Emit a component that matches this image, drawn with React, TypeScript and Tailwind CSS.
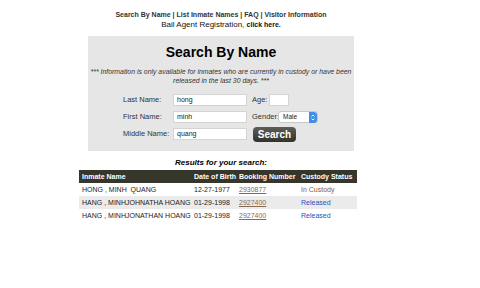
import React from 'react';

const rows = [
  { name: 'HONG , MINH  QUANG', dob: '12-27-1977', booking: '2930877', status: 'In Custody' },
  { name: 'HANG , MINHJOHNATHA HOANG', dob: '01-29-1998', booking: '2927400', status: 'Released' },
  { name: 'HANG , MINHJONATHAN HOANG', dob: '01-29-1998', booking: '2927400', status: 'Released' },
];

function Field({ value, width }: { value: string; width: string }) {
  return (
    <div className={`${width} h-[12px] bg-white border border-[#d4d4d4] text-[7px] leading-[10px] pl-[3px] text-[#222]`}>
      {value}
    </div>
  );
}

export default function App() {
  return (
    <div className="w-[480px] h-[288px] bg-white overflow-hidden text-[#222]" style={{ fontFamily: 'Arial, "Liberation Sans", sans-serif' }}>
      <div className="w-[442px]">
        <div className="pt-[10px] text-center">
          <div className="text-[7px] leading-[10px] font-bold text-[#333]">
            Search By Name | List Inmate Names | FAQ | Visitor Information
          </div>
          <div className="text-[8px] leading-[10px] text-[#111]">
            Bail Agent Registration, <span className="font-bold text-[7px]">click here.</span>
          </div>
        </div>

        <div className="ml-[88px] mt-[6px] w-[266px] h-[115px] bg-[#e6e6e6] pt-[7px]">
          <h1 className="text-center text-[14px] leading-[18px] font-bold text-black">Search By Name</h1>
          <p className="mt-[6px] text-center text-[6.9px] leading-[9px] italic text-[#333] whitespace-nowrap">
            *** Information is only available for inmates who are currently in custody or have been
            <br />
            released in the last 30 days. ***
          </p>

          <div className="mt-[9px] pl-[35px] flex flex-col gap-[5px] text-[7.5px] text-[#333]">
            <div className="flex items-center h-[12px]">
              <span className="w-[50px]">Last Name:</span>
              <Field value="hong" width="w-[74px]" />
              <span className="ml-[5px] w-[17px]">Age:</span>
              <Field value="" width="w-[20px]" />
            </div>
            <div className="flex items-center h-[12px]">
              <span className="w-[50px]">First Name:</span>
              <Field value="minh" width="w-[74px]" />
              <span className="ml-[5px] w-[26px]">Gender:</span>
              <div className="w-[40px] h-[12px] bg-white border border-[#c8c8c8] rounded-[3px] flex items-center justify-between pl-[4px] text-[6.5px] text-[#222]">
                <span>Male</span>
                <span className="w-[8px] h-[11px] bg-[#3d8fe8] rounded-r-[3px] flex flex-col items-center justify-center">
                  <svg width="4" height="7" viewBox="0 0 4 7">
                    <path d="M0.5 2.5 L2 1 L3.5 2.5 M0.5 4.5 L2 6 L3.5 4.5" stroke="white" strokeWidth="0.9" fill="none" />
                  </svg>
                </span>
              </div>
            </div>
            <div className="flex items-center h-[12px]">
              <span className="w-[50px]">Middle Name:</span>
              <Field value="quang" width="w-[74px]" />
              <button className="ml-[6px] w-[43px] h-[15px] rounded-[4px] bg-gradient-to-b from-[#5e5e56] to-[#33332c] text-white font-bold text-[10px] leading-[15px] text-center">
                Search
              </button>
            </div>
          </div>
        </div>

        <div className="mt-[7px] text-center text-[8px] leading-[10px] font-bold italic text-black">
          Results for your search:
        </div>
      </div>
      <table className="ml-[79px] mt-[2px] w-[278px] border-collapse text-[7px] leading-[13px]">
        <thead>
          <tr className="bg-[#37362b] text-white font-bold text-left">
            <th className="pl-[3px] w-[112px] h-[12px] font-bold">Inmate Name</th>
            <th className="pl-[3px] w-[45px] font-bold">Date of Birth</th>
            <th className="pl-[3px] w-[62px] font-bold">Booking Number</th>
            <th className="pl-[3px] font-bold">Custody Status</th>
          </tr>
        </thead>
        <tbody>
          {rows.map((r, i) => (
            <tr key={i} className={i === 1 ? 'bg-[#ebebeb]' : 'bg-white'}>
              <td className="pl-[3px] h-[13px] text-[#222] whitespace-pre">{r.name}</td>
              <td className="pl-[3px] text-[#222]">{r.dob}</td>
              <td className="pl-[3px] text-[#8a6a4c] underline">{r.booking}</td>
              <td className={`pl-[3px] ${r.status === 'Released' ? 'text-[#2a50c0]' : 'text-[#8a5a3c]'}`}>{r.status}</td>
            </tr>
          ))}
        </tbody>
      </table>
    </div>
  );
}
